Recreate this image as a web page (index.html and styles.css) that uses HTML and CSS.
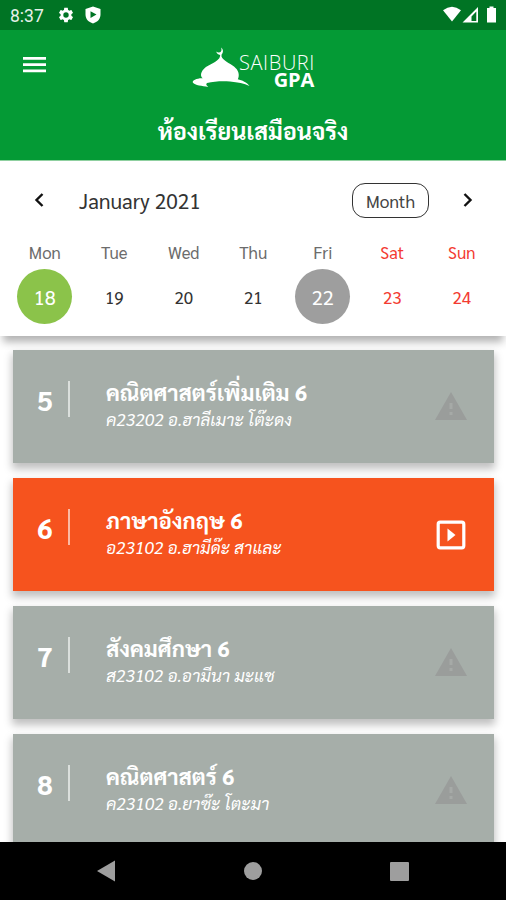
FILE: index.html
```html
<!DOCTYPE html>
<html lang="th">
<head>
    <meta charset="UTF-8">
    <meta name="viewport" content="width=device-width, initial-scale=1.0">
    <title>SAIBURI GPA</title>
    <link rel="stylesheet" href="styles.css">
</head>
<body>
    <div class="status-bar">
        <span class="clock">8:37</span>
        <svg class="gear" width="18" height="18" viewBox="0 0 24 24"><path fill="#fff" d="M19.14 12.94c.04-.3.06-.61.06-.94s-.02-.64-.07-.94l2.03-1.58c.18-.14.23-.41.12-.61l-1.92-3.32c-.12-.22-.37-.29-.59-.22l-2.39.96c-.5-.38-1.03-.7-1.62-.94l-.36-2.54c-.04-.24-.24-.41-.48-.41h-3.84c-.24 0-.43.17-.47.41l-.36 2.54c-.59.24-1.13.57-1.62.94l-2.39-.96c-.22-.08-.47 0-.59.22L2.74 8.87c-.12.21-.08.47.12.61l2.03 1.58c-.05.3-.09.63-.09.94s.02.64.07.94l-2.03 1.58c-.18.14-.23.41-.12.61l1.92 3.32c.12.22.37.29.59.22l2.39-.96c.5.38 1.03.7 1.62.94l.36 2.54c.05.24.24.41.48.41h3.84c.24 0 .44-.17.47-.41l.36-2.54c.59-.24 1.13-.56 1.62-.94l2.39.96c.22.08.47 0 .59-.22l1.92-3.32c.12-.22.07-.47-.12-.61zM12 15.6A3.6 3.6 0 1 1 12 8.4a3.6 3.6 0 0 1 0 7.2z"/></svg>
        <svg class="shield" width="16" height="18" viewBox="0 0 16 18"><path fill="#fff" fill-rule="evenodd" d="M8 .5 15.5 3V8.5C15.5 13 12.5 16 8 17.5 3.5 16 .5 13 .5 8.5V3ZM5.5 5.3V12L11.5 8.6Z"/></svg>
        <svg class="system-icons" width="56" height="18" viewBox="0 0 56 18">
            <path fill="#fff" d="M1 4.3Q10-2.800 19 4.300L10 15.500Z"/>
            <path fill="#fff" fill-rule="evenodd" d="M36 1V16.500H20.500ZM34.300 5.500 29.500 10.500V14.900H34.300Z"/>
            <path fill="#fff" d="M45 2h2.500V.5h4V2H54v14.500H45Z"/>
        </svg>
    </div>

    <header class="app-bar">
        <div class="app-bar-top">
            <svg class="menu" width="24" height="18" viewBox="0 0 24 18"><path fill="#fff" d="M0 1h23v2.800H0zM0 7.300h23v2.800H0zM0 13.500h23v2.800H0z"/></svg>
            <div class="logo">
                <svg width="60" height="43" viewBox="0 0 60 43"><path fill="#fff" d="M28.200 9C26 8.500 24.500 7.300 24.300 5.500 25.500 6.800 28 7 29 5.500 29.700 4.400 29.600 3 29 1.500 31.500 3.200 31.600 6.500 29.600 8.400L29.500 10.500C31 14.500 37.500 17.200 42 20.500 46.500 24 48 29 45.800 33.300 50 34.200 55 36.500 57.500 40 52 37.500 46 36.200 38 35.500 30 34.800 22 35.400 15 37 13.500 38.500 14.500 39.300 16.300 41 10 39.800 3 39.500 .8 36.500 0 34.500 5 32 10.700 32.300 9 31 8.500 28.500 9.500 26.500 11.500 20.500 20 18.500 25 14.500 27 13 28 11.500 28.200 9Z"/></svg>
                <div class="logo-text">
                    <span class="logo-name">SAIBURI</span>
                    <span class="logo-gpa">GPA</span>
                </div>
            </div>
        </div>
        <h1 class="page-title">ห้องเรียนเสมือนจริง</h1>
    </header>

    <section class="calendar">
        <div class="calendar-header">
            <svg class="prev" width="10" height="16" viewBox="0 0 10 16"><path fill="none" stroke="#111" stroke-width="2.400" d="M8.500 2 2.500 8l6 6"/></svg>
            <span class="month-name">January 2021</span>
            <button class="month-button">Month</button>
            <svg class="next" width="10" height="16" viewBox="0 0 10 16"><path fill="none" stroke="#111" stroke-width="2.400" d="M1.500 2l6 6-6 6"/></svg>
        </div>
        <div class="week">
            <div class="day"><span class="day-name">Mon</span><span class="day-number selected">18</span></div>
            <div class="day"><span class="day-name">Tue</span><span class="day-number">19</span></div>
            <div class="day"><span class="day-name">Wed</span><span class="day-number">20</span></div>
            <div class="day"><span class="day-name">Thu</span><span class="day-number">21</span></div>
            <div class="day"><span class="day-name">Fri</span><span class="day-number today">22</span></div>
            <div class="day weekend"><span class="day-name">Sat</span><span class="day-number">23</span></div>
            <div class="day weekend"><span class="day-name">Sun</span><span class="day-number">24</span></div>
        </div>
    </section>

    <main class="class-list">
        <article class="class-card">
            <span class="period">5</span>
            <div class="class-info">
                <h2>คณิตศาสตร์เพิ่มเติม 6</h2>
                <p>ค23202 อ.ฮาลีเมาะ โต๊ะดง</p>
            </div>
            <svg class="warning" width="34" height="30" viewBox="0 0 34 30"><path fill="#9a9d9b" d="M17 1 33 29H1Z"/><path fill="#a6aaa7" d="M15.500 12h3v6h-3ZM15.500 21h3v3h-3Z"/></svg>
        </article>
        <article class="class-card live">
            <span class="period">6</span>
            <div class="class-info">
                <h2>ภาษาอังกฤษ 6</h2>
                <p>อ23102 อ.ฮามีด๊ะ สาและ</p>
            </div>
            <svg class="play" width="30" height="30" viewBox="0 0 30 30"><rect x="2.200" y="2.200" width="25.600" height="25.600" rx="2" fill="none" stroke="#fff" stroke-width="3.200"/><path fill="#fff" d="M11.500 8.500v13l8-6.500Z"/></svg>
        </article>
        <article class="class-card">
            <span class="period">7</span>
            <div class="class-info">
                <h2>สังคมศึกษา 6</h2>
                <p>ส23102 อ.อามีนา มะแซ</p>
            </div>
            <svg class="warning" width="34" height="30" viewBox="0 0 34 30"><path fill="#9a9d9b" d="M17 1 33 29H1Z"/><path fill="#a6aaa7" d="M15.500 12h3v6h-3ZM15.500 21h3v3h-3Z"/></svg>
        </article>
        <article class="class-card">
            <span class="period">8</span>
            <div class="class-info">
                <h2>คณิตศาสตร์ 6</h2>
                <p>ค23102 อ.ยาซ๊ะ โตะมา</p>
            </div>
            <svg class="warning" width="34" height="30" viewBox="0 0 34 30"><path fill="#9a9d9b" d="M17 1 33 29H1Z"/><path fill="#a6aaa7" d="M15.500 12h3v6h-3ZM15.500 21h3v3h-3Z"/></svg>
        </article>
    </main>

    <nav class="nav-bar">
        <svg width="18" height="22" viewBox="0 0 18 22"><path fill="#9e9e9e" d="M18 .5v21L0 11Z"/></svg>
        <svg width="18" height="18" viewBox="0 0 18 18"><circle cx="9" cy="9" r="9" fill="#9e9e9e"/></svg>
        <svg width="19" height="19" viewBox="0 0 19 19"><rect width="19" height="19" rx="1" fill="#9e9e9e"/></svg>
    </nav>
</body>
</html>
```
FILE: styles.css
```css
* {
    box-sizing: border-box;
}
body {
    margin: 0;
    width: 506px;
    height: 900px;
    overflow: hidden;
    display: flex;
    flex-direction: column;
    background-color: #fff;
    font-family: Sarabun, "Noto Sans", sans-serif;
}
svg {
    display: block;
    flex: none;
}
h1, h2, p {
    margin: 0;
    white-space: nowrap;
}
.status-bar {
    height: 30px;
    flex: none;
    display: flex;
    align-items: center;
    padding: 0 8px 0 10px;
    background-color: #007424;
}
.clock {
    width: 47px;
    font: 17.5px/30px Roboto, sans-serif;
    color: #e6f1e9;
    padding-top: 2px;
}
.shield {
    margin-left: 10px;
}
.system-icons {
    margin-left: auto;
}
.app-bar {
    height: 131px;
    flex: none;
    background-color: #049a35;
    color: #fff;
    border-bottom: 1px solid #8fd0a0;
}
.app-bar-top {
    display: flex;
    height: 70px;
    padding: 16px 0 0 23px;
}
.menu {
    margin-top: 10px;
}
.logo {
    display: flex;
    margin-left: 145px;
}
.logo-text {
    display: flex;
    flex-direction: column;
    align-items: flex-end;
    width: 76px;
    margin: 9px 0 0 -14px;
}
.logo-name {
    font: 300 20px/16px "Open Sans", sans-serif;
    letter-spacing: 0.6px;
    margin-right: -1px;
}
.logo-gpa {
    font: 700 20px/17px "Open Sans", sans-serif;
    letter-spacing: -0.2px;
}
.page-title {
    font-size: 23.4px;
    line-height: 40px;
    margin-top: 10px;
    text-align: center;
}
.calendar {
    height: 175px;
    flex: none;
    background-color: #fff;
    box-shadow: 0 9px 8px -3px rgba(0, 0, 0, 0.3);
    clip-path: inset(0 0 -14px 0);
}
.calendar-header {
    height: 78px;
    display: flex;
    align-items: center;
    padding: 0 33px 0 34px;
}
.month-name {
    margin-left: 35px;
    font-size: 20.9px;
    color: #333;
}
.month-button {
    width: 77px;
    height: 35px;
    margin: 0 34px 0 auto;
    padding: 1px 0 0;
    border: 1px solid #333;
    border-radius: 13px;
    background: none;
    font: 17.3px Sarabun, "Noto Sans", sans-serif;
    color: #444;
}
.week {
    display: grid;
    grid-template-columns: repeat(7, 69.5px);
    padding-left: 10px;
}
.day {
    display: flex;
    flex-direction: column;
    align-items: center;
    color: #333;
}
.day-name {
    font-size: 16.8px;
    line-height: 26px;
    color: #6c6c6c;
}
.day-number {
    width: 55px;
    height: 55px;
    margin-top: 4px;
    border-radius: 50%;
    text-align: center;
    font-size: 17px;
    line-height: 56px;
}
.selected, .today {
    background-color: #8bc34a;
    color: #fff;
    font-size: 20px;
}
.today {
    background-color: #9e9e9e;
}
.weekend, .weekend .day-name {
    color: #f33b32;
}
.class-list {
    flex: 1;
    min-height: 0;
    overflow: hidden;
    display: flex;
    flex-direction: column;
    gap: 15px;
    padding: 13.5px 12px 0 13px;
}
.class-card {
    height: 113px;
    flex: none;
    display: flex;
    align-items: flex-start;
    padding: 0 27px 0 24px;
    background-color: #a6aea9;
    color: #fff;
    box-shadow: 0 5px 8px 1px rgba(0, 0, 0, 0.25);
}
.live {
    background-color: #f6531e;
}
.period {
    width: 33px;
    height: 36px;
    margin-top: 31px;
    border-right: 2px solid rgba(255, 255, 255, 0.6);
    font-size: 28px;
    font-weight: 700;
    line-height: 36px;
}
.class-info {
    margin: 27px auto 0 36px;
}
.class-info h2 {
    font-size: 22.2px;
    line-height: 30px;
}
.class-info p {
    font-size: 17.2px;
    font-style: italic;
    line-height: 25px;
}
.warning {
    margin: 41px -1px 0 0;
}
.play {
    margin: 42px 1px 0 0;
}
.nav-bar {
    height: 58px;
    flex: none;
    display: flex;
    align-items: center;
    justify-content: space-between;
    padding: 0 97px;
    background-color: #000;
}
```
